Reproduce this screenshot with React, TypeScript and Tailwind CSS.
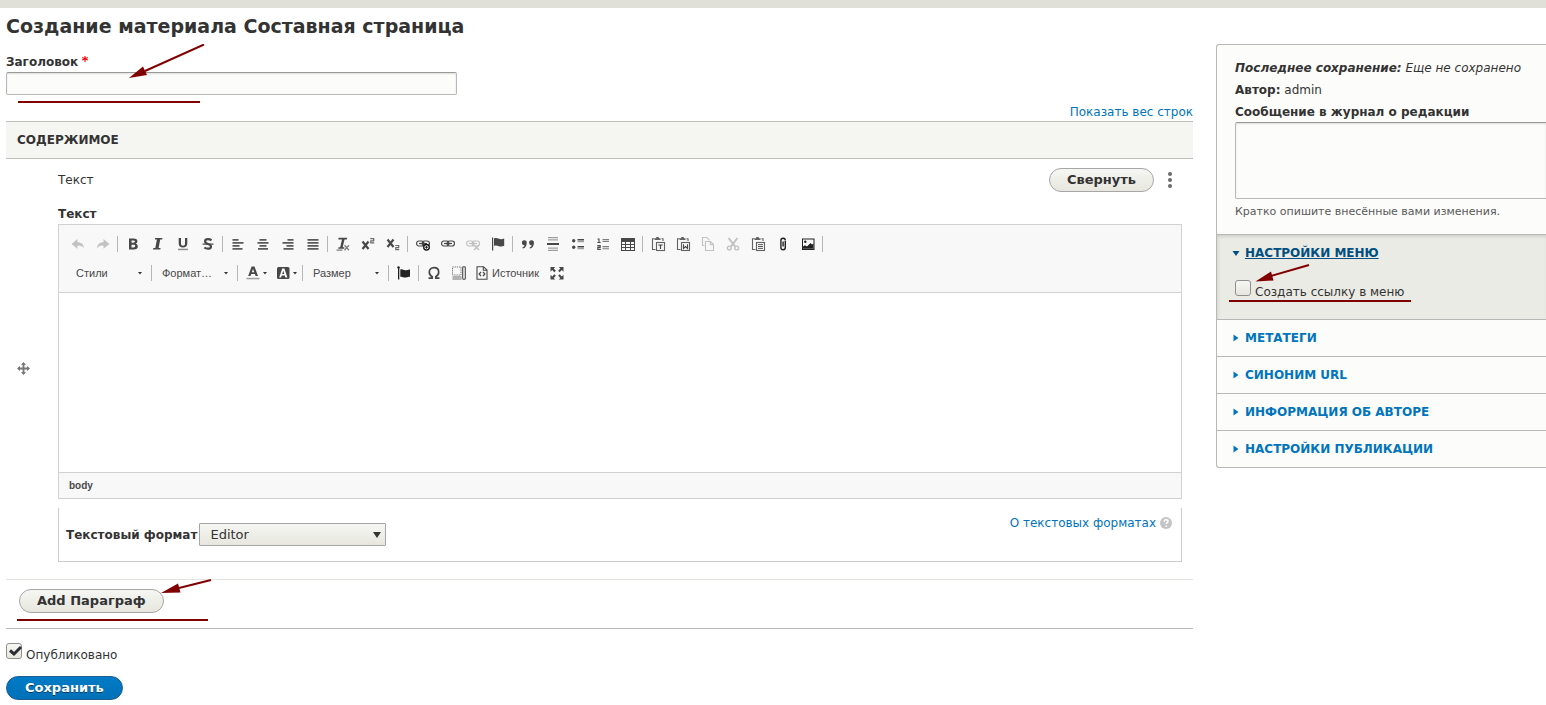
import { useState, type ReactNode } from "react";

const ink = "#484848";

type IconProps = { children: ReactNode; faded?: boolean };

function Icon({ children, faded }: IconProps) {
  return (
    <svg viewBox="0 0 16 16" width="16" height="16" fill={ink} stroke="none" className={faded ? "opacity-30" : ""} aria-hidden="true">
      {children}
    </svg>
  );
}

const chain = (
  <g fill="none" stroke={ink} strokeWidth="1.2">
    <rect x="1.6" y="5" width="7.2" height="5" rx="2.2" />
    <rect x="7.2" y="5" width="7.2" height="5" rx="2.2" />
    <path d="M4 7.5h8" />
  </g>
);

const clipboard = (
  <g opacity="0.85">
    <path d="M4.500 2.800H2.500v10.700H5.500M11.500 2.800h1.500v2.200" fill="none" stroke={ink} strokeWidth="1.1" />
    <path d="M4.500 2.200h1.700V1h2.600v1.200h1.700v1.900h-6z" />
    <rect x="6.500" y="6.500" width="8" height="8" fill="#f8f8f8" stroke={ink} strokeWidth="1.1" />
  </g>
);

type Tool = { label: string; icon: ReactNode; faded?: boolean };

const groups: Tool[][] = [
  [
    { label: "Отменить", faded: true, icon: <path d="M7.5 3v3.2c3.8 0 6.3 2.1 6.5 6.3-1.3-2.2-3.2-3-6.5-2.900v3.200L1.600 8z" /> },
    { label: "Повторить", faded: true, icon: <path d="M8.5 3v3.2c-3.8 0-6.3 2.1-6.5 6.3 1.3-2.2 3.2-3 6.5-2.900v3.200L14.400 8z" /> },
  ],
  [
    {
      label: "Полужирный",
      icon: <path fillRule="evenodd" d="M4 2.500h4.800c2.300 0 3.600 1 3.600 2.800 0 1.200-.6 2-1.700 2.400 1.400.3 2.100 1.200 2.100 2.600 0 2.100-1.500 3.200-4 3.200H4zm2.500 2v2.300h1.900c1 0 1.500-.4 1.500-1.200s-.5-1.100-1.500-1.100zm0 4.200v2.800h2c1.100 0 1.700-.5 1.700-1.400s-.6-1.400-1.700-1.400z" />,
    },
    { label: "Курсив", icon: <path d="M5.200 2h7.300l-.3 1.600h-2L8.600 12h2l-.3 1.600H3l.3-1.600h2L6.900 3.600h-2z" /> },
    {
      label: "Подчеркнутый",
      icon: (
        <g>
          <path d="M3.700 2H6v5.500c0 1.500.6 2.200 2 2.200s2-.7 2-2.200V2h2.300v5.600c0 2.600-1.600 4-4.300 4s-4.300-1.400-4.300-4z" />
          <path d="M3 12.700h10v1.500H3z" opacity=".6" />
        </g>
      ),
    },
    {
      label: "Зачеркнутый",
      icon: (
        <g>
          <path d="M11.500 4.300C10.500 3.500 9.300 3.200 8 3.200c-1.800 0-2.900.7-2.900 2.200C5.100 8.600 11 7.300 11 10.400c0 1.600-1.200 2.300-3.100 2.300-1.400 0-2.600-.4-3.500-1.200" fill="none" stroke={ink} strokeWidth="2.2" />
          <path d="M2.500 7.500h11v1.200h-11z" />
        </g>
      ),
    },
  ],
  [
    { label: "По левому краю", icon: <path d="M2.500 3h6v1.700h-6zm0 3h11v1.700h-11zm0 3h7v1.700h-7zm0 3h10v1.700h-10z" opacity=".9" /> },
    { label: "По центру", icon: <path d="M4.500 3h7v1.700h-7zm-2 3h11v1.700h-11zm2 3h7v1.700h-7zm-1.500 3h10v1.700h-10z" opacity=".9" /> },
    { label: "По правому краю", icon: <path d="M7.500 3h6v1.700h-6zm-5 3h11v1.700h-11zm4 3h7v1.700h-7zm-3 3h10v1.700h-10z" opacity=".9" /> },
    { label: "По ширине", icon: <path d="M2.500 3h11v1.700h-11zm0 3h11v1.700h-11zm0 3h11v1.700h-11zm0 3h11v1.700h-11z" opacity=".9" /> },
  ],
  [
    {
      label: "Убрать форматирование",
      icon: (
        <g>
          <path d="M3.600 1.800h8.600l-.4 1.700H9.500L7.700 11.200h1.600v1.500H3.200l.3-1.500h1.700L7 3.500H3.300z" />
          <path d="M9.500 9.300l4.500 4.900m0-4.900l-4.500 4.900M1.500 14.200h6" fill="none" stroke={ink} strokeWidth="1.300" opacity=".7" />
        </g>
      ),
    },
    {
      label: "Надстрочный индекс",
      icon: (
        <g fill="none" stroke={ink}>
          <path d="M2.500 5.500l6 7.500m0-7.500l-6 7.500" strokeWidth="2.2" />
          <path d="M10.300 2.700h3.400v2.100h-2.900v2.100h3.400" strokeWidth="1.2" opacity=".8" />
        </g>
      ),
    },
    {
      label: "Подстрочный индекс",
      icon: (
        <g fill="none" stroke={ink}>
          <path d="M2.500 3.500l6 7.500m0-7.500l-6 7.500" strokeWidth="2.2" />
          <path d="M10.300 9.500h3.400v2.100h-2.900v2.100h3.400" strokeWidth="1.2" opacity=".8" />
        </g>
      ),
    },
  ],
  [
    {
      label: "Вставить ссылку",
      icon: (
        <g>
          {chain}
          <circle cx="11.500" cy="11.300" r="2.800" fill="#f8f8f8" stroke="#111" strokeWidth="1.3" />
          <path d="M11.500 9.900v2.800M10.100 11.300h2.800" stroke="#111" strokeWidth=".9" />
        </g>
      ),
    },
    { label: "Редактировать ссылку", icon: chain },
    {
      label: "Убрать ссылку",
      faded: true,
      icon: (
        <g>
          {chain}
          <path d="M9 9l5 5m0-5l-5 5" stroke={ink} strokeWidth="1.5" />
        </g>
      ),
    },
    { label: "Якорь", icon: <path d="M2 1.500h1.200v13H2zm2 1c1.500-.8 3-.6 4.300.1 1.900.9 3.700.9 5.900-.1v7.300c-2 .9-4 .9-5.900.1-1.400-.6-2.800-.7-4.300 0z" /> },
  ],
  [
    { label: "Цитата", icon: <path d="M4.200 4.300a2.400 2.400 0 0 1 2.500 2.600c0 3-1.500 5-3.900 5.600l-.4-1c1.300-.5 2-1.300 2.100-2.300A2.400 2.400 0 0 1 4.200 4.300zm7.200 0a2.400 2.400 0 0 1 2.500 2.600c0 3-1.500 5-3.900 5.600l-.4-1c1.300-.5 2-1.300 2.100-2.300a2.400 2.400 0 0 1-.3-4.900z" /> },
    {
      label: "Горизонтальная линия",
      icon: (
        <g>
          <path d="M2 7h12v2H2z" />
          <path d="M3 1h10v1.200H3zm0 2.300h10v1.200H3zm0 8.200h10v1.200H3zm0 2.300h10V15H3z" opacity=".5" />
        </g>
      ),
    },
    {
      label: "Маркированный список",
      icon: (
        <g>
          <circle cx="3.700" cy="4.700" r="1.700" />
          <circle cx="3.700" cy="11.300" r="1.700" />
          <path d="M7.500 3h6.500v1.500H7.500zm0 7h6.500v1.500H7.500z" />
          <path d="M7.500 5h6.500v1.300H7.500zm0 7h6.500v1.300H7.500z" opacity=".5" />
        </g>
      ),
    },
    {
      label: "Нумерованный список",
      icon: (
        <g>
          <path d="M2.500 3h1.500v4M2.300 6.500h3.400M2.300 9.600h2.900v1.800H2.800v2h3" fill="none" stroke={ink} strokeWidth="1.1" />
          <path d="M7.500 3h6.500v1.200H7.500zm0 2h6.500v1H7.500zm0 5h6.500v1.200H7.500zm0 2.200h6.500v1H7.500z" opacity=".7" />
        </g>
      ),
    },
    {
      label: "Таблица",
      icon: <path fillRule="evenodd" d="M1 2h14v13H1zm1 4v2h3V6zm4 0v2h4V6zm5 0v2h3V6zM2 9v2h3V9zm4 0v2h4V9zm5 0v2h3V9zm-9 3v2h3v-2zm4 0v2h4v-2zm5 0v2h3v-2z" />,
    },
  ],
  [
    {
      label: "Вставить только текст",
      icon: (
        <g>
          {clipboard}
          <path d="M8.300 9h4.400M10.500 9v4" stroke={ink} strokeWidth="1.2" />
        </g>
      ),
    },
    {
      label: "Вставить из Word",
      icon: (
        <g>
          {clipboard}
          <path d="M8.500 8.200v4.300l2-2 2 2V8.200" fill="none" stroke={ink} strokeWidth="1.1" />
        </g>
      ),
    },
    {
      label: "Копировать",
      faded: true,
      icon: <path d="M4.500 9.500H2.500v-8h4.300l2.200 2.200V4.500M5.500 5.500h5l3 3v6h-8zm4.800 0v3.300h3.200" fill="none" stroke={ink} strokeWidth="1.1" />,
    },
    {
      label: "Вырезать",
      faded: true,
      icon: (
        <g fill="none" stroke={ink}>
          <path d="M3.500 2l7 9m2-9l-7 9" strokeWidth="2" />
          <circle cx="4.300" cy="12" r="1.900" strokeWidth="1.4" />
          <circle cx="11.700" cy="12" r="1.900" strokeWidth="1.4" />
        </g>
      ),
    },
    {
      label: "Вставить",
      icon: (
        <g>
          {clipboard}
          <path d="M8 8.600h5M8 10.500h5M8 12.400h5" stroke={ink} strokeWidth=".9" />
        </g>
      ),
    },
    { label: "Файл", icon: <path d="M10.300 5v6.500a2.200 2.200 0 0 1-4.400 0V4.500a2.200 2.200 0 0 1 4.400 0M8.100 5.500v5" fill="none" stroke="#222" strokeWidth="1.4" /> },
    {
      label: "Изображение",
      icon: (
        <g>
          <path fillRule="evenodd" fill="#222" d="M2 2.500h12.500v11.500H2zm1 1v9.500h10.500V3.500z" />
          <circle cx="5.300" cy="5.700" r="1.200" fill="#222" />
          <path fill="#222" d="M3 12.800V10.500l2-1.300 2 1.300 3.500-3.500L12 8.500l1.500-1v5.300z" />
        </g>
      ),
    },
  ],
];

function Caret() {
  return (
    <svg viewBox="0 0 4 3" width="4" height="3" className="shrink-0" aria-hidden="true">
      <path d="M0 0h4L2 2.500z" fill="#333" />
    </svg>
  );
}

function Separator() {
  return (
    <span className="flex w-[5px] justify-center">
      <span className="h-4 w-px bg-[#b6b6b6]" />
    </span>
  );
}

function ToolButton({ label, icon, faded }: Tool) {
  return (
    <button type="button" title={label} aria-label={label} className="flex h-6 w-[25px] items-center justify-center">
      <Icon faded={faded}>{icon}</Icon>
    </button>
  );
}

function Combo({ text, label }: { text: string; label: string }) {
  return (
    <span className="relative flex w-[81px] items-center">
      <select aria-label={label} className="h-6 w-full appearance-none bg-transparent pl-2 text-[11px] text-[#484848]">
        <option>{text}</option>
      </select>
      <span className="pointer-events-none absolute right-[7px]">
        <Caret />
      </span>
    </span>
  );
}

function Toolbar() {
  return (
    <div className="border-b border-[#d1d1d1] bg-[#f8f8f8] px-1.5 pt-1 pb-1 font-['Liberation_Sans',Arial,sans-serif]">
      <div className="flex h-[29px] items-center">
        {groups.map((group, i) => (
          <div key={i} className="flex items-center">
            {group.map((tool) => (
              <ToolButton key={tool.label} {...tool} />
            ))}
            <Separator />
          </div>
        ))}
      </div>
      <div className="flex h-[30px] items-center pl-[3px]">
        <Combo text="Стили" label="Стили форматирования" />
        <Separator />
        <Combo text="Формат…" label="Форматирование" />
        <Separator />
        <button type="button" aria-label="Цвет текста" className="flex h-6 w-[30px] items-center gap-0.5 pl-[5px]">
          <Icon>
            <path fillRule="evenodd" d="M6.600 1.500h2.900L13 11h-2.400l-.7-2H6.200l-.7 2H3.200zM8 4L6.800 7.300h2.500z" />
            <path d="M1.500 12.800h13v1.500h-13z" opacity=".5" />
          </Icon>
          <Caret />
        </button>
        <button type="button" aria-label="Цвет фона" className="flex h-6 w-[30px] items-center gap-0.5 pl-[5px]">
          <Icon>
            <rect x="2" y="2" width="12.500" height="12" rx="1.500" />
            <path fill="#fff" fillRule="evenodd" d="M7.200 3.500h2.200l3 9h-2l-.6-2H6.700l-.6 2H4.200zm1.100 2.300L7.200 9h2.100z" />
          </Icon>
          <Caret />
        </button>
        <Separator />
        <Combo text="Размер" label="Размер шрифта" />
        <Separator />
        <ToolButton
          label="Флаг"
          icon={
            <g fill="#222">
              <circle cx="2.500" cy="2.500" r="1.200" />
              <path d="M2 2h1.300v12.500H2zm2.300 2.500c2-.8 3 .8 5 .8 1.700 0 3-1 4.700-.8v7.300c-2-.6-3 .7-5 .7s-3-1.300-4.700-.7z" />
            </g>
          }
        />
        <Separator />
        <ToolButton
          label="Вставить специальный символ"
          icon={<path d="M2.500 13.200h3.700v-1.500C4.300 10.700 3.300 9.200 3.300 7.200c0-2.700 1.900-4.600 4.700-4.600s4.700 1.900 4.700 4.600c0 2-1 3.500-2.900 4.500v1.500h3.700" fill="none" stroke={ink} strokeWidth="1.7" />}
        />
        <ToolButton
          label="Показать блоки"
          icon={
            <g fill="none" stroke={ink}>
              <rect x="1.500" y="2" width="8.500" height="8" strokeDasharray="1.200 1" opacity=".8" />
              <rect x="11.700" y="1.700" width="2.600" height="12.500" rx=".8" strokeWidth="1.100" />
              <path d="M1.500 12h9m-9 2h9" opacity=".8" />
            </g>
          }
        />
        <button type="button" className="flex h-6 items-center gap-0.5 pr-1.5 pl-[3px] text-[11px] text-[#484848]">
          <Icon>
            <path d="M3 1.700h6.500L13 5v9.300H3zM9.300 2v3.300H13" fill="none" stroke={ink} strokeWidth="1.1" />
            <path d="M7 6.800L5.200 9 7 11.200M9 6.800L10.800 9 9 11.200" fill="none" stroke={ink} strokeWidth="1.3" />
          </Icon>
          Источник
        </button>
        <ToolButton
          label="Развернуть"
          icon={
            <path d="M1.500 2h4.700L4.700 3.500l2.200 2.200-1.500 1.500-2.200-2.200L1.500 6.700zM14.500 2H9.800l1.500 1.500-2.200 2.200 1.500 1.500 2.200-2.200 1.700 1.700zM1.500 14.500h4.700L4.700 13l2.200-2.200-1.500-1.500-2.200 2.200-1.700-1.700zM14.500 14.500H9.800l1.500-1.500-2.200-2.200 1.500-1.500 2.200 2.200 1.700-1.700z" />
          }
        />
      </div>
    </div>
  );
}

function GreyButton({ children }: { children: ReactNode }) {
  return (
    <button
      type="button"
      className="h-6 rounded-full border border-[#a6a6a6] bg-linear-to-b from-[#f6f6f3] to-[#e7e7df] px-[17px] text-[13px] leading-[22px] font-bold text-[#333]"
    >
      {children}
    </button>
  );
}

function Checkbox({ id, label, defaultChecked }: { id: string; label: string; defaultChecked?: boolean }) {
  const [checked, setChecked] = useState(!!defaultChecked);
  return (
    <div className="flex items-baseline gap-1">
      <span className="relative h-4 w-4">
        <input
          id={id}
          type="checkbox"
          checked={checked}
          onChange={(e) => setChecked(e.target.checked)}
          className="block h-4 w-4 appearance-none rounded-[3px] border border-[#8f8f8f] bg-linear-to-b from-[#f6f6f3] to-[#e7e7df]"
        />
        {checked && (
          <svg viewBox="0 0 16 16" className="pointer-events-none absolute inset-0" aria-hidden="true">
            <path d="M4 7.500l4 3.500L15 4" fill="none" stroke="#2b2f33" strokeWidth="3" />
          </svg>
        )}
      </span>
      <label htmlFor={id} className="leading-[18px]">
        {label}
      </label>
    </div>
  );
}

const sections = ["Метатеги", "Синоним URL", "Информация об авторе", "Настройки публикации"];

function Sidebar() {
  return (
    <aside className="w-[330px] shrink-0 self-start rounded-l-[3px] border border-r-0 border-[#b8b8b8] bg-[#fcfcfa]">
      <div className="pt-3 pb-2.5 pl-[18px]">
        <p className="leading-[22px] italic">
          <b>Последнее сохранение:</b> Еще не сохранено
        </p>
        <p className="leading-[22px]">
          <b>Автор:</b> admin
        </p>
        <label htmlFor="log" className="block h-[21px] leading-[22px] font-bold">
          Сообщение в журнал о редакции
        </label>
        <textarea
          id="log"
          className="block h-[77px] w-full resize-none rounded-l-[2px] border border-r-0 border-[#b8b8b8] border-t-[#999] bg-[#fcfcfa] px-2 py-1 shadow-[inset_0_1px_2px_rgba(0,0,0,0.125)]"
        />
        <p className="text-[11px] leading-[25px] text-[#595959]">Кратко опишите внесённые вами изменения.</p>
      </div>

      <details open className="group relative border-t border-[#b8b8b8] bg-[#ebebe5] shadow-[inset_1px_2px_3px_rgba(0,0,0,0.1)]">
        <summary className="flex h-9 cursor-pointer list-none items-center gap-1 pl-[14px] font-bold text-[#004f80] uppercase">
          <svg viewBox="0 0 10 10" width="10" height="10" className="-rotate-90 group-open:rotate-0" aria-hidden="true">
            <path d="M1.500 3h7L5 8z" fill="#004f80" />
          </svg>
          <span className="underline">Настройки меню</span>
        </summary>
        <div className="pt-[9px] pb-[18px] pl-[18px]">
          <Checkbox id="menu-link" label="Создать ссылку в меню" />
        </div>
        <svg viewBox="0 0 200 50" width="200" height="50" className="pointer-events-none absolute top-[23px] left-2" aria-hidden="true">
          <path d="M84 7L44 18.500" stroke="#800000" strokeWidth="2" />
          <path d="M30.500 23.500l15.500-10 2.500 9z" fill="#800000" />
          <path d="M4 43h182" stroke="#800000" strokeWidth="2" />
        </svg>
      </details>

      {sections.map((title) => (
        <details key={title} className="group border-t border-[#b8b8b8]">
          <summary className="flex h-9 cursor-pointer list-none items-center gap-1 pl-[14px] leading-5 font-bold text-[#0074bd] uppercase">
            <svg viewBox="0 0 10 10" width="10" height="10" className="group-open:rotate-90" aria-hidden="true">
              <path d="M2.500 1.500v7l5-3.500z" fill="#0074bd" />
            </svg>
            {title}
          </summary>
        </details>
      ))}
    </aside>
  );
}

export default function App() {
  return (
    <div className="min-h-screen overflow-x-hidden bg-white font-['DejaVu_Sans',sans-serif] text-[12px] text-[#333]">
      <div className="h-2 bg-[#e0e0d8]" />
      <h1 className="pl-1.5 text-[19px] leading-9 font-bold">Создание материала Составная страница</h1>

      <div className="flex gap-[23px] pl-1.5">
        <main className="min-w-0 flex-1">
          <div className="relative pt-2">
            <label htmlFor="title" className="flex gap-1 leading-5 font-bold">
              Заголовок
              <svg viewBox="0 0 6 6" width="6" height="6" className="mt-1" aria-hidden="true">
                <path d="M3 0v6M.200 1.500l5.600 2.600M5.800 1.500L.200 4.100" stroke="#e00" strokeWidth="1.100" />
              </svg>
            </label>
            <input
              id="title"
              type="text"
              className="block h-[23px] w-[451px] rounded-[2px] border border-[#b8b8b8] border-t-[#999] bg-[#fcfcfa] px-2 shadow-[inset_0_1px_2px_rgba(0,0,0,0.125)]"
            />
            <svg viewBox="0 0 210 62" width="210" height="62" className="pointer-events-none absolute top-0 left-0" aria-hidden="true">
              <path d="M198 .500L139 27" stroke="#800000" strokeWidth="2" />
              <path d="M123 34l14-11.500 4 8.500z" fill="#800000" />
              <path d="M12 58h182" stroke="#800000" strokeWidth="2" />
            </svg>
          </div>

          <div className="mt-2 text-right leading-[18px]">
            <a href="#weights" className="text-[#0074bd]">
              Показать вес строк
            </a>
          </div>

          <table className="w-full border-separate border-spacing-0">
            <thead>
              <tr>
                <th colSpan={2} className="h-[38px] border-y border-[#bfbfba] bg-[#f5f5f2] pl-[11px] text-left uppercase">
                  Содержимое
                </th>
              </tr>
            </thead>
            <tbody>
              <tr>
                <td className="w-[52px] border-b border-[#e6e4df] pb-0.5 pl-[11px] align-middle">
                  <a href="#drag" aria-label="Переместить" className="block">
                    <svg viewBox="0 0 13 13" width="13" height="13" aria-hidden="true">
                      <path d="M6.500 1v11M1 6.500h11" stroke="#787878" strokeWidth="1.800" />
                      <path d="M6.500 0L9 3H4zM6.500 13L4 10h5zM0 6.500L3 4v5zM13 6.500L10 9V4z" fill="#787878" />
                    </svg>
                  </a>
                </td>
                <td className="border-b border-[#e6e4df] pt-[9px] pr-[11px] pb-[17px]">
                  <div className="flex items-center gap-1">
                    <span className="flex-1 leading-5">Текст</span>
                    <GreyButton>Свернуть</GreyButton>
                    <button type="button" aria-label="Действия" className="flex h-6 w-6 items-center justify-center">
                      <svg viewBox="0 0 4 16" width="4" height="16" fill="#6b6b6b" aria-hidden="true">
                        <circle cx="2" cy="2" r="2" />
                        <circle cx="2" cy="8" r="2" />
                        <circle cx="2" cy="14" r="2" />
                      </svg>
                    </button>
                  </div>

                  <label htmlFor="body" className="mt-3 block leading-5 font-bold">
                    Текст
                  </label>
                  <div className="border border-[#d1d1d1]">
                    <Toolbar />
                    <textarea id="body" className="block h-[179px] w-full resize-none bg-white p-5" />
                    <div className="border-t border-[#d1d1d1] bg-[#f8f8f8] px-2.5 font-['Liberation_Sans',Arial,sans-serif] text-[10px] leading-[25px] font-bold text-[#484848]">
                      body
                    </div>
                  </div>

                  <div className="mt-[9px] flex items-start justify-between border border-t-0 border-[#ccc] pr-[9px] pb-[15px] pl-[7px]">
                    <div className="flex items-center gap-0.5 pt-[15px]">
                      <label htmlFor="format" className="font-bold">
                        Текстовый формат
                      </label>
                      <span className="relative flex items-center">
                        <select
                          id="format"
                          className="h-[23px] w-[187px] appearance-none rounded-[1px] border border-[#a6a6a6] bg-linear-to-b from-[#f6f6f3] to-[#e7e7df] pl-2.5 text-[13px]"
                        >
                          <option>Editor</option>
                        </select>
                        <svg viewBox="0 0 8 6" width="8" height="6" className="pointer-events-none absolute right-[5px]" aria-hidden="true">
                          <path d="M0 0h8L4 6z" fill="#333" />
                        </svg>
                      </span>
                    </div>
                    <a href="#formats" className="flex items-center gap-1 pt-1.5 leading-[18px] text-[#0074bd]">
                      О текстовых форматах
                      <svg viewBox="0 0 12 12" width="12" height="12" aria-hidden="true">
                        <circle cx="6" cy="6" r="6" fill="#c4c4c4" />
                        <path d="M4 4.600c.1-1.200.9-1.800 2-1.800s2 .6 2 1.600c0 1.200-1.800 1.200-1.800 2.700M6.200 8.200v1.500" fill="none" stroke="#fff" strokeWidth="1.500" />
                      </svg>
                    </a>
                  </div>
                </td>
              </tr>
            </tbody>
          </table>

          <div className="relative border-b border-[#b8b8b4] pt-[9px] pb-[15px] pl-[13px]">
            <GreyButton>Add Параграф</GreyButton>
            <svg viewBox="0 0 210 44" width="210" height="44" className="pointer-events-none absolute top-[-2px] left-0" aria-hidden="true">
              <path d="M205 2l-32 8" stroke="#800000" strokeWidth="2" />
              <path d="M155 15l17-9.500 2.500 9z" fill="#800000" />
              <path d="M11 42h191" stroke="#800000" strokeWidth="2" />
            </svg>
          </div>

          <div className="mt-[14px]">
            <Checkbox id="published" label="Опубликовано" defaultChecked />
          </div>
          <button
            type="button"
            className="mt-3 h-6 rounded-full border border-[#1e5c90] bg-linear-to-b from-[#007bc6] to-[#0071b8] px-[18px] text-[13px] leading-[22px] font-bold text-white [text-shadow:0_1px_rgba(0,0,0,0.5)]"
          >
            Сохранить
          </button>
        </main>

        <Sidebar />
      </div>
    </div>
  );
}
